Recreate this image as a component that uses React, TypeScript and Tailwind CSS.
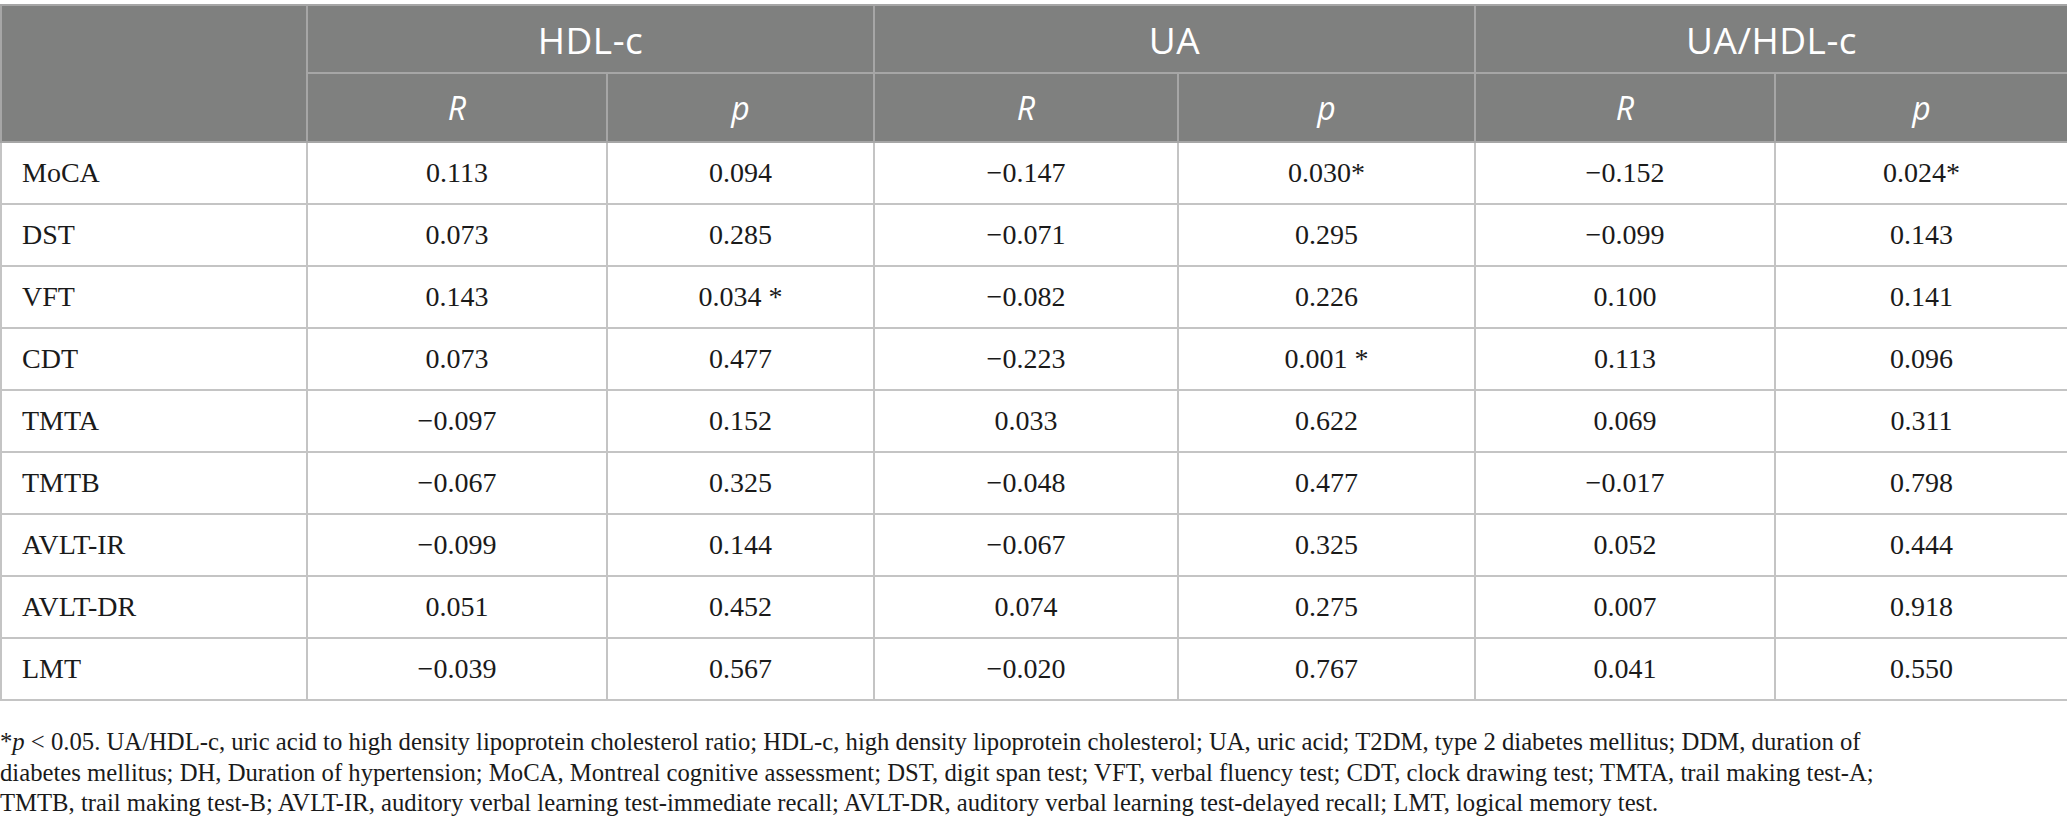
import React from "react";

const rows: [string, string, string, string, string, string, string][] = [
  ["MoCA", "0.113", "0.094", "\u22120.147", "0.030*", "\u22120.152", "0.024*"],
  ["DST", "0.073", "0.285", "\u22120.071", "0.295", "\u22120.099", "0.143"],
  ["VFT", "0.143", "0.034 *", "\u22120.082", "0.226", "0.100", "0.141"],
  ["CDT", "0.073", "0.477", "\u22120.223", "0.001 *", "0.113", "0.096"],
  ["TMTA", "\u22120.097", "0.152", "0.033", "0.622", "0.069", "0.311"],
  ["TMTB", "\u22120.067", "0.325", "\u22120.048", "0.477", "\u22120.017", "0.798"],
  ["AVLT-IR", "\u22120.099", "0.144", "\u22120.067", "0.325", "0.052", "0.444"],
  ["AVLT-DR", "0.051", "0.452", "0.074", "0.275", "0.007", "0.918"],
  ["LMT", "\u22120.039", "0.567", "\u22120.020", "0.767", "0.041", "0.550"],
];

const serif = "font-['Liberation_Serif','Times_New_Roman',serif]";

export default function App() {
  return (
    <div className="w-[2067px] h-[826px] bg-white overflow-hidden pt-[4px]">
      <table className="w-[2067px] table-fixed border-collapse">
        <colgroup>
          <col className="w-[306px]" />
          <col className="w-[300px]" />
          <col className="w-[267px]" />
          <col className="w-[304px]" />
          <col className="w-[297px]" />
          <col className="w-[300px]" />
          <col className="w-[293px]" />
        </colgroup>
        <thead className="bg-[#7f807f] text-white font-['Open_Sans','Noto_Sans',sans-serif]">
          <tr className="h-[68px]">
            <th rowSpan={2} className="border-2 border-[#a6a6a6]"></th>
            <th colSpan={2} className="border-2 border-[#a6a6a6] text-[37px] font-normal tracking-[0.5px] leading-none">HDL-c</th>
            <th colSpan={2} className="border-2 border-[#a6a6a6] text-[37px] font-normal tracking-[0.5px] leading-none">UA</th>
            <th colSpan={2} className="border-2 border-[#a6a6a6] text-[37px] font-normal tracking-[0.5px] leading-none">UA/HDL-c</th>
          </tr>
          <tr className="h-[69px]">
            {["R", "p", "R", "p", "R", "p"].map((t, i) => (
              <th key={i} className="border-2 border-[#a6a6a6] text-[32px] italic font-normal leading-none">
                {t}
              </th>
            ))}
          </tr>
        </thead>
        <tbody className={`${serif} text-[28px] text-[#1a1a1a]`}>
          {rows.map((r) => (
            <tr key={r[0]} className="h-[62px]">
              {r.map((c, i) => (
                <td
                  key={i}
                  className={`border-2 border-[#c4c4c4] leading-none ${i === 0 ? "text-left pl-[20px]" : "text-center"}`}
                >
                  {c}
                </td>
              ))}
            </tr>
          ))}
        </tbody>
      </table>
      <div className={`${serif} text-[24.7px] text-[#1a1a1a] mt-[26px] whitespace-nowrap`}>
        <div className="leading-[30.5px]">
          *<i>p</i> &lt; 0.05. UA/HDL-c, uric acid to high density lipoprotein cholesterol ratio; HDL-c, high density lipoprotein cholesterol; UA, uric acid; T2DM, type 2 diabetes mellitus; DDM, duration of
        </div>
        <div className="leading-[30.5px]">
          diabetes mellitus; DH, Duration of hypertension; MoCA, Montreal cognitive assessment; DST, digit span test; VFT, verbal fluency test; CDT, clock drawing test; TMTA, trail making test-A;
        </div>
        <div className="leading-[30.5px]">
          TMTB, trail making test-B; AVLT-IR, auditory verbal learning test-immediate recall; AVLT-DR, auditory verbal learning test-delayed recall; LMT, logical memory test.
        </div>
      </div>
    </div>
  );
}
